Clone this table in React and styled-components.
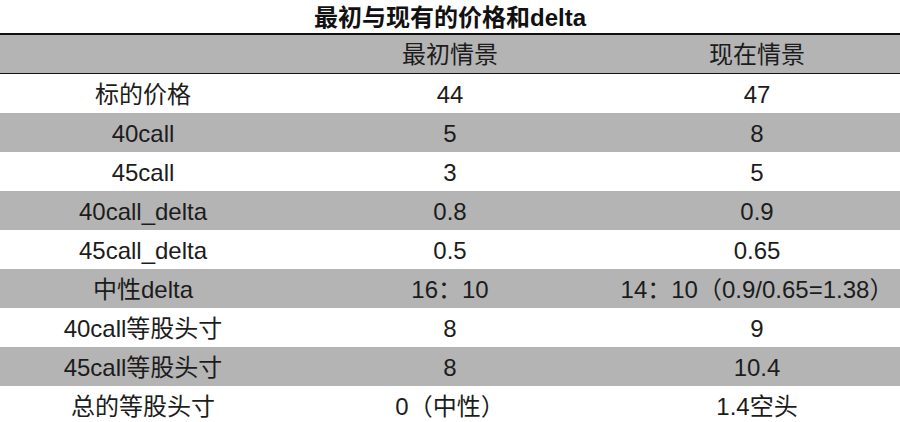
import React from "react";
import styled, { createGlobalStyle } from "styled-components";

const Global = createGlobalStyle`
  html, body { margin: 0; padding: 0; background: #fff; }
  body { font-family: "Liberation Sans", "Noto Sans CJK SC", sans-serif; color: #1a1a1a; }
`;

const Page = styled.div`
  width: 900px;
  display: flex;
  flex-direction: column;
`;

const Title = styled.div`
  height: 33px;
  display: flex;
  align-items: center;
  justify-content: center;
  font-size: 24px;
  line-height: 24px;
  font-weight: bold;
  color: #111;
  padding-top: 2px;
  box-sizing: border-box;
`;

const Table = styled.div`
  border-top: 2px solid #111;
  display: flex;
  flex-direction: column;
`;

const Row = styled.div`
  display: grid;
  grid-template-columns: 286px 328px 286px;
  height: ${(p) => (p.$header ? "38px" : "39px")};
  background: ${(p) => (p.$shaded ? "#b4b4b4" : "#ffffff")};
  border-bottom: ${(p) => (p.$header ? "1px solid #111" : "none")};
`;

const Cell = styled.div`
  display: flex;
  align-items: center;
  justify-content: center;
  font-size: 24px;
  line-height: 24px;
  padding-top: 2px;
  color: #1c1c1c;
  white-space: nowrap;
`;

const rows = [
  ["标的价格", "44", "47"],
  ["40call", "5", "8"],
  ["45call", "3", "5"],
  ["40call_delta", "0.8", "0.9"],
  ["45call_delta", "0.5", "0.65"],
  ["中性delta", "16：10", "14：10（0.9/0.65=1.38）"],
  ["40call等股头寸", "8", "9"],
  ["45call等股头寸", "8", "10.4"],
  ["总的等股头寸", "0（中性）", "1.4空头"],
];

export default function App() {
  return (
    <Page>
      <Global />
      <Title>最初与现有的价格和delta</Title>
      <Table>
        <Row $header $shaded>
          <Cell />
          <Cell>最初情景</Cell>
          <Cell>现在情景</Cell>
        </Row>
        {rows.map((r, i) => (
          <Row key={i} $shaded={i % 2 === 1}>
            <Cell>{r[0]}</Cell>
            <Cell>{r[1]}</Cell>
            <Cell>{r[2]}</Cell>
          </Row>
        ))}
      </Table>
    </Page>
  );
}
